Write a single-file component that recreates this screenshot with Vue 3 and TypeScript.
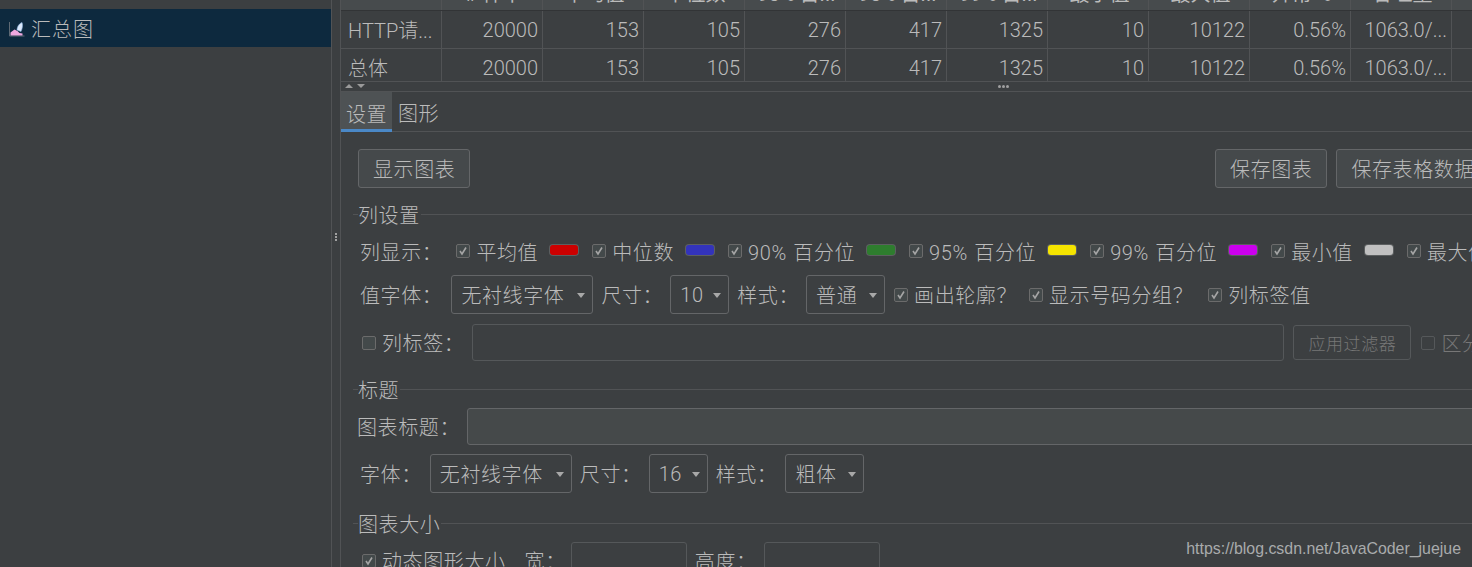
<script setup lang="ts">
// summary report panel, dark IDE theme
const headers = ['Label', '# 样本', '平均值', '中位数', '90% 百...', '95% 百...', '99% 百...', '最小值', '最大值', '异常 %', '吞吐量', '接']
const rows = [
  ['HTTP请...', '20000', '153', '105', '276', '417', '1325', '10', '10122', '0.56%', '1063.0/...', ''],
  ['总体', '20000', '153', '105', '276', '417', '1325', '10', '10122', '0.56%', '1063.0/...', '']
]
const series = [
  { name: '平均值', color: '#cc0000' },
  { name: '中位数', color: '#3333bb' },
  { name: '90% 百分位', color: '#2e7d2e' },
  { name: '95% 百分位', color: '#f5e400' },
  { name: '99% 百分位', color: '#cc00ee' },
  { name: '最小值', color: '#c0c0c0' }
]
</script>

<template>
  <div class="app">
    <aside class="tree">
      <div class="tree-row clipped">察看结果树</div>
      <div class="tree-row selected">
        <svg class="chart-icon" width="18" height="16" viewBox="0 0 18 16">
          <path d="M1.500 1v14h15" fill="none" stroke="#5f6a74" stroke-width="1" />
          <path d="M2.500 14.500v-3l4-3 3 1.500 2 2 3 .5v2z" fill="#f0a8e0" />
          <path d="M9 9c0-3 2-6.500 5-7.500 1 2 .5 6-1 9z" fill="#dbe8fa" stroke="#8fb4e0" stroke-width=".6" />
        </svg>
        <span>汇总图</span>
      </div>
    </aside>

    <div class="divider"><i></i><i></i><i></i></div>

    <main class="panel">
      <div class="table">
        <div class="table-row head">
          <div v-for="h in headers" :key="h" class="cell">{{ h }}</div>
        </div>
        <div v-for="(row, r) in rows" :key="r" class="table-row">
          <div v-for="(c, i) in row" :key="i" class="cell" :class="{ num: i > 0 }">{{ c }}</div>
        </div>
      </div>

      <div class="split">
        <span class="arrow up"></span>
        <span class="arrow down"></span>
        <span class="grip"><i></i><i></i><i></i></span>
      </div>

      <div class="tabs">
        <div class="tab active">设置</div>
        <div class="tab">图形</div>
      </div>

      <div class="form">
        <div class="buttons">
          <button class="btn">显示图表</button>
          <button class="btn push">保存图表</button>
          <button class="btn">保存表格数据</button>
        </div>

        <div class="legend first"><span>列设置</span></div>

        <div class="row show-row">
          <span class="label">列显示：</span>
          <template v-for="s in series" :key="s.name">
            <label class="check">
              <span class="box on"><svg width="10" height="10" viewBox="0 0 10 10"><path d="M2 5l2 3 4-6.500" fill="none" stroke="#a5a5a5" stroke-width="1.600" /></svg></span>
              {{ s.name }}
            </label>
            <span class="swatch" :style="{ background: s.color }"></span>
          </template>
          <label class="check">
            <span class="box on"><svg width="10" height="10" viewBox="0 0 10 10"><path d="M2 5l2 3 4-6.500" fill="none" stroke="#a5a5a5" stroke-width="1.600" /></svg></span>
            最大值
          </label>
        </div>

        <div class="row font-row">
          <span class="label value-label">值字体：</span>
          <div class="select wide">无衬线字体<b></b></div>
          <span class="label">尺寸：</span>
          <div class="select small">10<b></b></div>
          <span class="label">样式：</span>
          <div class="select mid">普通<b></b></div>
          <label class="check c1">
            <span class="box on"><svg width="10" height="10" viewBox="0 0 10 10"><path d="M2 5l2 3 4-6.500" fill="none" stroke="#a5a5a5" stroke-width="1.600" /></svg></span>
            画出轮廓？
          </label>
          <label class="check c2">
            <span class="box on"><svg width="10" height="10" viewBox="0 0 10 10"><path d="M2 5l2 3 4-6.500" fill="none" stroke="#a5a5a5" stroke-width="1.600" /></svg></span>
            显示号码分组？
          </label>
          <label class="check c3">
            <span class="box on"><svg width="10" height="10" viewBox="0 0 10 10"><path d="M2 5l2 3 4-6.500" fill="none" stroke="#a5a5a5" stroke-width="1.600" /></svg></span>
            列标签值
          </label>
        </div>

        <div class="row filter-row">
          <label class="check"><span class="box"></span>列标签：</label>
          <div class="input filter"></div>
          <button class="btn disabled">应用过滤器</button>
          <label class="check off"><span class="box"></span>区分大小写</label>
        </div>

        <div class="legend title-legend"><span>标题</span></div>

        <div class="row title-row">
          <span class="label">图表标题：</span>
          <div class="input title-input"></div>
        </div>

        <div class="row font-row second">
          <span class="label">字体：</span>
          <div class="select wide">无衬线字体<b></b></div>
          <span class="label">尺寸：</span>
          <div class="select small">16<b></b></div>
          <span class="label">样式：</span>
          <div class="select mid">粗体<b></b></div>
        </div>

        <div class="legend size-legend"><span>图表大小</span></div>

        <div class="row size-row">
          <label class="check">
            <span class="box on"><svg width="10" height="10" viewBox="0 0 10 10"><path d="M2 5l2 3 4-6.500" fill="none" stroke="#a5a5a5" stroke-width="1.600" /></svg></span>
            动态图形大小
          </label>
          <span class="label w">宽：</span>
          <div class="input size"></div>
          <span class="label h">高度：</span>
          <div class="input size"></div>
        </div>
      </div>
    </main>

    <div class="watermark">https://blog.csdn.net/JavaCoder_juejue</div>
  </div>
</template>

<style scoped>
.app {
  position: relative;
  display: flex;
  width: 1472px;
  height: 567px;
  overflow: hidden;
  background: #3c3f41;
  color: #bbbbbb;
  font-family: Roboto, "Noto Sans CJK SC", sans-serif;
  font-size: 20px;
  font-weight: 300;
}

/* left tree */
.tree {
  width: 331px;
  flex: none;
  border-right: 1px solid #515355;
}
.tree-row {
  height: 38px;
  display: flex;
  align-items: center;
  gap: 5px;
  padding-left: 8px;
  letter-spacing: 1px;
  box-sizing: border-box;
}
.tree-row.clipped {
  margin-top: -29px;
  padding-left: 32px;
  font-size: 17px;
}
.tree-row.selected {
  background: #0d293e;
  padding-top: 1px;
}
.chart-icon {
  flex: none;
}

.divider {
  width: 9px;
  flex: none;
  display: flex;
  flex-direction: column;
  align-items: center;
  justify-content: center;
  gap: 1px;
  padding-bottom: 93px;
  box-sizing: border-box;
  border-right: 1px solid #515355;
}
.divider i {
  width: 2px;
  height: 2px;
  background: #a0a0a0;
}

.panel {
  width: 1131px;
  flex: none;
  display: flex;
  flex-direction: column;
  overflow: hidden;
}

/* results table */
.table {
  height: 82px;
  overflow: hidden;
  flex: none;
  border-bottom: 1px solid #515355;
  box-sizing: border-box;
}
.table-row {
  display: grid;
  grid-template-columns: repeat(12, 101px);
  height: 38px;
  border-bottom: 1px solid #515355;
  box-sizing: border-box;
}
.table-row.head {
  margin-top: -27px;
  background: #474b4d;
  border-bottom-color: #323436;
  font-weight: 400;
}
.cell {
  display: flex;
  align-items: center;
  padding: 0 4px 0 7px;
  border-right: 1px solid #515355;
  white-space: nowrap;
  overflow: hidden;
  box-sizing: border-box;
}
.head .cell {
  justify-content: center;
  padding-top: 2px;
}
.cell.num {
  justify-content: flex-end;
}

/* splitter */
.split {
  position: relative;
  height: 9px;
  flex: none;
  border-bottom: 1px solid #515355;
}
.arrow {
  position: absolute;
  top: 2px;
  width: 0;
  height: 0;
  border-left: 4px solid transparent;
  border-right: 4px solid transparent;
}
.arrow.up {
  left: 4px;
  border-bottom: 4px solid #9a9a9a;
}
.arrow.down {
  left: 16px;
  border-top: 4px solid #9a9a9a;
}
.grip {
  position: absolute;
  left: 657px;
  top: 3px;
  display: flex;
  gap: 1px;
}
.grip i {
  width: 3px;
  height: 3px;
  border-radius: 50%;
  background: #a0a0a0;
}

/* tabs */
.tabs {
  display: flex;
  height: 40px;
  flex: none;
  border-bottom: 1px solid #515355;
  box-sizing: border-box;
  letter-spacing: 0.6px;
}
.tab {
  width: 51px;
  display: flex;
  align-items: center;
  justify-content: center;
  box-sizing: border-box;
  padding-top: 2px;
  margin-right: 1px;
}
.tab.active {
  background: #4e5254;
  box-shadow: inset 0 -3px 0 #4a88c7;
  height: 40px;
}

/* form */
.form {
  width: 1161px;
  box-sizing: border-box;
  padding: 17px 12px 0 0;
  letter-spacing: 0.6px;
}
.buttons {
  display: flex;
  padding-left: 17px;
  gap: 9px;
}
.btn {
  height: 39px;
  padding: 0 14px;
  font: inherit;
  letter-spacing: inherit;
  color: #bbbbbb;
  background: #45494b;
  border: 1px solid #646668;
  border-radius: 3px;
  white-space: nowrap;
  box-sizing: border-box;
}
.btn.push {
  margin-left: auto;
}

.legend {
  display: flex;
  align-items: center;
  height: 24px;
  padding-left: 12px;
}
.legend span {
  margin-top: -2px;
}
.legend::before,
.legend::after {
  content: "";
  height: 1px;
  margin-bottom: 2px;
  background: #515355;
}
.legend::before {
  width: 5px;
  flex: none;
}
.legend::after {
  flex: 1;
  margin-left: 1px;
}
.legend.first {
  margin-top: 15px;
}
.legend.title-legend {
  margin-top: 17px;
}
.legend.size-legend {
  margin-top: 19px;
}

.row {
  display: flex;
  align-items: center;
  white-space: nowrap;
}
.row > * {
  flex: none;
}
.show-row {
  height: 24px;
  margin-top: 12px;
  padding-left: 19px;
  word-spacing: 1px;
}
.show-row .label {
  margin-right: 14px;
}
.swatch {
  width: 28px;
  height: 10px;
  margin: -2px 14px 0 12px;
  border-radius: 3px;
  box-shadow: 0 0 0 1px #5c5f60;
}
.check {
  display: inline-flex;
  align-items: center;
  gap: 6px;
}
.box {
  width: 14px;
  height: 14px;
  flex: none;
  display: flex;
  align-items: center;
  justify-content: center;
  box-sizing: border-box;
  border: 1px solid #6b6b6b;
  border-radius: 2px;
  background: #43494a;
}

.font-row {
  height: 39px;
  margin-top: 12px;
  padding-left: 19px;
  gap: 8px;
}
.value-label {
  margin-right: 1px;
}
.select {
  position: relative;
  height: 39px;
  display: flex;
  align-items: center;
  padding-left: 9px;
  box-sizing: border-box;
  border: 1px solid #646668;
  border-radius: 3px;
}
.select b {
  position: absolute;
  right: 7px;
  top: 17px;
  width: 0;
  height: 0;
  border-left: 4px solid transparent;
  border-right: 4px solid transparent;
  border-top: 5px solid #a8a8a8;
}
.select.wide {
  width: 142px;
}
.select.small {
  width: 59px;
  margin-left: -1px;
}
.select.mid {
  width: 79px;
  margin-left: -1px;
}
.second .select.mid {
  margin-left: 0;
}
.check.c1 {
  margin-left: 1px;
}
.check.c2 {
  margin-left: 4px;
}
.check.c3 {
  margin-left: 7px;
}

.filter-row {
  height: 37px;
  margin-top: 10px;
  padding-left: 21px;
}
.input {
  height: 37px;
  box-sizing: border-box;
  border: 1px solid #55585a;
  border-radius: 3px;
}
.filter {
  width: 812px;
  margin-left: 8px;
}
.btn.disabled {
  height: 35px;
  margin-left: 9px;
  padding: 0;
  width: 118px;
  font-size: 17px;
  color: #777777;
  background: transparent;
  border-color: #55585a;
}
.check.off {
  margin-left: 10px;
  color: #777777;
}
.check.off .box {
  border-color: #55585a;
  background: transparent;
}

.title-row {
  height: 37px;
  margin-top: 6px;
  padding-left: 16px;
}
.title-input {
  width: 1100px;
  margin-left: 7px;
  background: #45494a;
  border-color: #646668;
}

.font-row.second {
  margin-top: 9px;
}

.size-row {
  height: 37px;
  margin-top: 6px;
  padding-left: 21px;
}
.label.w {
  margin: 0 5px 0 19px;
}
.label.h {
  margin: 0 7px 0 8px;
}
.input.size {
  width: 116px;
}

.watermark {
  position: absolute;
  right: 11px;
  bottom: 9px;
  font-family: "Liberation Sans", sans-serif;
  font-size: 15.9px;
  font-weight: 400;
  color: #a9abac;
}
</style>

<style>
body {
  background: #3c3f41;
}
</style>
